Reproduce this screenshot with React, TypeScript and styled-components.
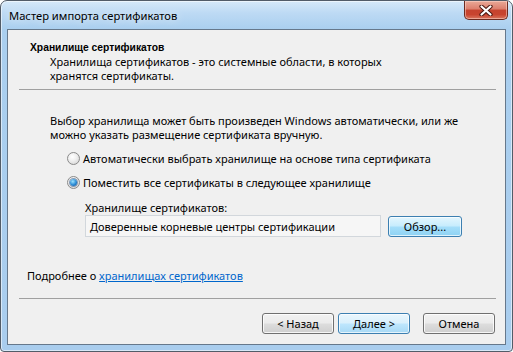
import React from "react";
import styled, { createGlobalStyle } from "styled-components";

const Global = createGlobalStyle`
  html, body { margin: 0; padding: 0; background: #ffffff; }
  body {
    font-family: "Noto Sans", "Segoe UI", "Liberation Sans", sans-serif;
    font-size: 11px;
    color: #000;
  }
  * { box-sizing: border-box; }
`;

const Window = styled.div`
  width: 513px;
  height: 352px;
  border: 1px solid #525c68;
  border-radius: 7px 7px 4px 4px;
  background: linear-gradient(180deg, #d6e9f9 0px, #bddaf4 12px, #aacfef 28px, #a9cdee 100%);
  box-shadow: inset 0 0 0 1px rgba(255, 255, 255, 0.55);
  display: flex;
  flex-direction: column;
  padding: 0 6px 6px 6px;
  overflow: hidden;
`;

const TitleBar = styled.div`
  height: 28px;
  display: flex;
  align-items: center;
  justify-content: space-between;
  padding-left: 2px;
`;

const Title = styled.span`
  font-size: 11.2px;
  color: #000;
  text-shadow: 0 0 8px rgba(255, 255, 255, 0.9);
`;

const CloseButton = styled.div`
  align-self: flex-start;
  width: 44px;
  height: 19px;
  margin-right: -2px;
  border: 1px solid #6b2a20;
  border-top: none;
  border-radius: 0 0 5px 5px;
  background: linear-gradient(180deg, #e9a998 0%, #dc7e6c 45%, #c5432f 50%, #c8442f 75%, #d9765f 100%);
  box-shadow: inset 0 0 0 1px rgba(255, 220, 210, 0.5);
  display: flex;
  align-items: center;
  justify-content: center;
`;

const Client = styled.div`
  flex: 1;
  border: 1px solid #66788b;
  background: #f0f0f0;
  display: flex;
  flex-direction: column;
`;

const Heading = styled.div`
  font-family: "Liberation Sans", "Noto Sans", sans-serif;
  font-weight: bold;
  font-size: 10.3px;
  line-height: 15px;
  margin: 10px 0 0 22px;
`;

const Description = styled.div`
  line-height: 14px;
  margin: 0 0 0 42px;
`;

const Separator = styled.div<{ $top: number }>`
  height: 1px;
  background: #a0a0a0;
  margin: ${(p) => p.$top}px 9px 0 11px;
`;

const Paragraph = styled.div`
  line-height: 14px;
  margin: 24px 0 0 42px;
`;

const RadioRow = styled.label<{ $top: number }>`
  display: flex;
  align-items: center;
  gap: 3px;
  height: 15px;
  line-height: 15px;
  margin: ${(p) => p.$top}px 0 0 59px;
`;

const RadioCircle = styled.span<{ $checked?: boolean }>`
  width: 13px;
  height: 13px;
  border-radius: 50%;
  border: 1px solid #8a8a8a;
  background: radial-gradient(circle at 40% 35%, #ffffff 0%, #f0f0f0 40%, #cfcfcf 100%);
  display: flex;
  align-items: center;
  justify-content: center;
  flex: none;
  &::after {
    content: "";
    display: ${(p) => (p.$checked ? "block" : "none")};
    width: 7px;
    height: 7px;
    border-radius: 50%;
    background: radial-gradient(circle at 40% 35%, #9be3ff 0%, #2a8ad4 55%, #0a4c94 100%);
    box-shadow: 0 0 0 1px rgba(30, 70, 120, 0.5);
  }
`;

const StoreLabel = styled.div`
  line-height: 15px;
  margin: 10px 0 0 77px;
`;

const StoreRow = styled.div`
  display: flex;
  align-items: center;
  gap: 7px;
  margin-left: 77px;
`;

const StoreField = styled.div`
  width: 296px;
  height: 22px;
  border: 1px solid #d2d7dc;
  background: #f6f6f6;
  padding-left: 4px;
  display: flex;
  align-items: center;
  line-height: 15px;
`;

const Button = styled.div<{ $variant?: "default" | "hot" }>`
  width: ${(p) => (p.$variant === "hot" ? 74 : 72)}px;
  height: 21px;
  border-radius: 3px;
  border: 1px solid ${(p) => (p.$variant ? "#3c7fb1" : "#707070")};
  background: ${(p) =>
    p.$variant === "hot"
      ? "linear-gradient(180deg, #e4f6fe 0%, #c6ecfd 48%, #a5defa 52%, #8dd2f3 100%)"
      : p.$variant === "default"
      ? "linear-gradient(180deg, #eaf6fd 0%, #d9f0fc 48%, #bee6fd 52%, #a7d9f5 100%)"
      : "linear-gradient(180deg, #f2f2f2 0%, #ebebeb 48%, #dddddd 52%, #cfcfcf 100%)"};
  box-shadow: inset 0 0 0 1px ${(p) => (p.$variant ? "rgba(255,255,255,0.7)" : "rgba(255,255,255,0.8)")};
  display: flex;
  align-items: center;
  justify-content: center;
  line-height: 15px;
  flex: none;
`;

const LinkRow = styled.div`
  line-height: 15px;
  margin: 31px 0 0 19px;
`;

const Link = styled.a`
  color: #0066cc;
  text-decoration: underline;
`;

const ButtonBar = styled.div`
  display: flex;
  justify-content: flex-end;
  align-items: center;
  margin: 14px 10px 0 0;
`;

const NavGroup = styled.div`
  display: flex;
  gap: 4px;
  margin-right: 13px;
`;

export default function App() {
  return (
    <>
      <Global />
      <Window>
        <TitleBar>
          <Title>Мастер импорта сертификатов</Title>
          <CloseButton>
            <svg width="14" height="11" viewBox="0 0 14 11">
              <path d="M2.5 1.5 L11.5 9.5 M11.5 1.5 L2.5 9.5" stroke="#4a1810" strokeWidth="4.2" strokeLinecap="round" />
              <path d="M2.5 1.5 L11.5 9.5 M11.5 1.5 L2.5 9.5" stroke="#ffffff" strokeWidth="2.2" strokeLinecap="round" />
            </svg>
          </CloseButton>
        </TitleBar>
        <Client>
          <Heading>Хранилище сертификатов</Heading>
          <Description>
            Хранилища сертификатов - это системные области, в которых
            <br />
            хранятся сертификаты.
          </Description>
          <Separator $top={6} />
          <Paragraph>
            Выбор хранилища может быть произведен Windows автоматически, или же
            <br />
            можно указать размещение сертификата вручную.
          </Paragraph>
          <RadioRow $top={9}>
            <RadioCircle />
            <span>Автоматически выбрать хранилище на основе типа сертификата</span>
          </RadioRow>
          <RadioRow $top={9}>
            <RadioCircle $checked />
            <span>Поместить все сертификаты в следующее хранилище</span>
          </RadioRow>
          <StoreLabel>Хранилище сертификатов:</StoreLabel>
          <StoreRow>
            <StoreField>Доверенные корневые центры сертификации</StoreField>
            <Button $variant="hot">Обзор...</Button>
          </StoreRow>
          <LinkRow>
            Подробнее о <Link>хранилищах сертификатов</Link>
          </LinkRow>
          <Separator $top={15} />
          <ButtonBar>
            <NavGroup>
              <Button>&lt; Назад</Button>
              <Button $variant="default">Далее &gt;</Button>
            </NavGroup>
            <Button>Отмена</Button>
          </ButtonBar>
        </Client>
      </Window>
    </>
  );
}
